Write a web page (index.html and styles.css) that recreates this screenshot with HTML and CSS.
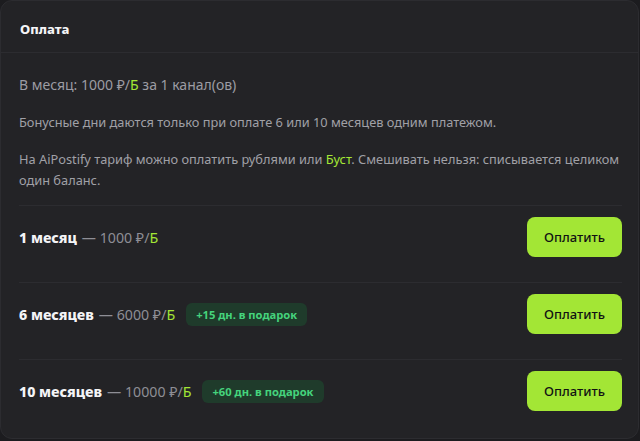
FILE: index.html
```html
<!DOCTYPE html>
<html lang="ru">
<head>
<meta charset="utf-8">
<title>Оплата</title>
<link rel="stylesheet" href="styles.css">
</head>
<body>
<section class="card">
  <header class="card-head">
    <h2 class="card-title">Оплата</h2>
  </header>
  <div class="card-body">
    <p class="lead">В месяц: 1000 ₽/<span class="lime">Б</span> за 1 канал(ов)</p>
    <p class="note">Бонусные дни даются только при оплате 6 или 10 месяцев одним платежом.</p>
    <p class="note note-last">На AiPostify тариф можно оплатить рублями или <span class="lime">Буст</span>. Смешивать нельзя: списывается целиком один баланс.</p>
    <div class="plans">
      <div class="plan">
        <div class="plan-info">
          <span class="plan-name">1 месяц</span>
          <span class="plan-price">— 1000 ₽/<span class="lime">Б</span></span>
        </div>
        <button class="pay">Оплатить</button>
      </div>
      <div class="plan">
        <div class="plan-info">
          <span class="plan-name">6 месяцев</span>
          <span class="plan-price">— 6000 ₽/<span class="lime">Б</span></span>
          <span class="gift">+15 дн. в подарок</span>
        </div>
        <button class="pay">Оплатить</button>
      </div>
      <div class="plan">
        <div class="plan-info">
          <span class="plan-name">10 месяцев</span>
          <span class="plan-price">— 10000 ₽/<span class="lime">Б</span></span>
          <span class="gift">+60 дн. в подарок</span>
        </div>
        <button class="pay">Оплатить</button>
      </div>
    </div>
  </div>
</section>
</body>
</html>
```

FILE: styles.css
```css
* { box-sizing: border-box; }
html, body {
  margin: 0;
  padding: 0;
  background: #1c1c1f;
}
body {
  font-family: "Noto Sans", "Open Sans", sans-serif;
  color: #a0a0a6;
  width: 640px;
  height: 441px;
  overflow: hidden;
}
.card {
  width: 639px;
  height: 439px;
  background: #232326;
  border: 1px solid #2c2c30;
  border-radius: 12px;
  overflow: hidden;
}
.card-head {
  height: 52px;
  padding: 4px 19px 0;
  display: flex;
  align-items: center;
  border-bottom: 1px solid #2c2c30;
}
.card-title {
  margin: 0;
  font-size: 13px;
  font-weight: 800;
  color: #f4f4f6;
}
.card-body {
  padding: 22px 16px 0 18px;
}
.lead {
  margin: 0 0 17px;
  font-size: 14px;
  line-height: 20px;
  color: #9c9ca3;
}
.note {
  margin: 0 0 16px;
  font-size: 12.8px;
  line-height: 21px;
  color: #a0a0a6;
}
.note-last {
  margin-bottom: 14px;
}
.lime { color: #a3e635; }
.plans {
  display: flex;
  flex-direction: column;
}
.plan {
  display: flex;
  align-items: center;
  justify-content: space-between;
  border-top: 1px solid #2c2c30;
  padding: 11px 0 25px;
}
.plan-info {
  display: flex;
  align-items: center;
  gap: 5px;
  font-size: 14.2px;
}
.plan-name {
  font-weight: 800;
  color: #f4f4f6;
}
.plan-price {
  color: #8e8e95;
}
.gift {
  margin-left: 6px;
  background: #1f3b2b;
  color: #45d37c;
  font-size: 11.2px;
  font-weight: 700;
  padding: 0 10px;
  height: 23px;
  line-height: 23px;
  border-radius: 6px;
}
.pay {
  width: 95px;
  height: 40px;
  border: 0;
  border-radius: 8px;
  background: #a3e635;
  color: #111113;
  font-family: inherit;
  font-size: 13px;
  font-weight: 500;
  cursor: pointer;
}
```
